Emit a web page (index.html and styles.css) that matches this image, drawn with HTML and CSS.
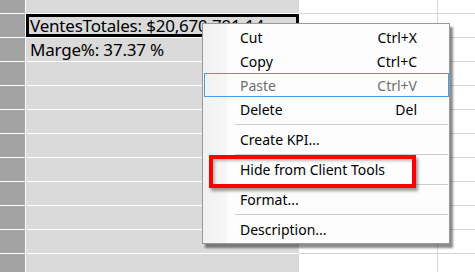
FILE: index.html
```html
<!DOCTYPE html>
<html lang="en">
<head>
    <meta charset="UTF-8">
    <title>Measures grid - context menu</title>
    <link rel="stylesheet" href="styles.css">
</head>
<body>
    <div class="sheet">
        <div class="row first">
            <div class="hdr"></div><div class="cell"></div><div class="blank"></div><div class="blank rest"></div>
        </div>
        <div class="row">
            <div class="hdr"></div><div class="cell selected">VentesTotales: $20,670,791.14</div><div class="blank"></div><div class="blank rest"></div>
        </div>
        <div class="row">
            <div class="hdr"></div><div class="cell">Marge%: 37.37 %</div><div class="blank"></div><div class="blank rest"></div>
        </div>
        <div class="row"><div class="hdr"></div><div class="cell"></div><div class="blank"></div><div class="blank rest"></div></div>
        <div class="row"><div class="hdr"></div><div class="cell"></div><div class="blank"></div><div class="blank rest"></div></div>
        <div class="row"><div class="hdr"></div><div class="cell"></div><div class="blank"></div><div class="blank rest"></div></div>
        <div class="row"><div class="hdr"></div><div class="cell"></div><div class="blank"></div><div class="blank rest"></div></div>
        <div class="row"><div class="hdr"></div><div class="cell"></div><div class="blank"></div><div class="blank rest"></div></div>
        <div class="row"><div class="hdr"></div><div class="cell"></div><div class="blank"></div><div class="blank rest"></div></div>
        <div class="row"><div class="hdr"></div><div class="cell"></div><div class="blank"></div><div class="blank rest"></div></div>
        <div class="row"><div class="hdr"></div><div class="cell"></div><div class="blank"></div><div class="blank rest"></div></div>
        <div class="row"><div class="hdr"></div><div class="cell"></div><div class="blank"></div><div class="blank rest"></div></div>
    </div>

    <!-- right-click menu over the grid -->
    <div class="context-menu">
        <div class="menu-item"><span>Cut</span><span>Ctrl+X</span></div>
        <div class="menu-item"><span>Copy</span><span>Ctrl+C</span></div>
        <div class="menu-item disabled hover"><span>Paste</span><span>Ctrl+V</span></div>
        <div class="menu-item"><span>Delete</span><span>Del</span></div>
        <div class="separator"></div>
        <div class="menu-item"><span>Create KPI...</span></div>
        <div class="separator"></div>
        <div class="menu-item"><span>Hide from Client Tools</span></div>
        <div class="separator"></div>
        <div class="menu-item"><span>Format...</span></div>
        <div class="separator"></div>
        <div class="menu-item"><span>Description...</span></div>
    </div>

    <div class="highlight"></div>
</body>
</html>
```

FILE: styles.css
```css
/* Basic Reset */
* {
    margin: 0;
    padding: 0;
    box-sizing: border-box;
}

body {
    font-family: "Noto Sans", "Open Sans", sans-serif;
    background-color: #fff;
    overflow: hidden;
    height: 272px;
}

/* Grid */
.sheet {
    display: flex;
    flex-direction: column;
}

.row {
    display: flex;
    height: 24px;
    flex-shrink: 0;
}

.row.first {
    height: 14px;
}

.hdr {
    width: 26px;
    background: #a3a3a3;
    border-right: 1px solid #fff;
    border-bottom: 1px solid #fff;
}

.cell {
    width: 273px;
    background: #dadada;
    border-bottom: 1px solid #fff;
    padding-left: 4px;
    font-size: 17px;
    letter-spacing: -0.2px;
    line-height: 24px;
    color: #000;
    white-space: nowrap;
    overflow: hidden;
}

.cell.selected {
    box-shadow: inset 0 0 0 3px #000;
}

.blank {
    width: 139px;
    border-right: 1px solid #d6d6d6;
    border-bottom: 1px solid #d6d6d6;
}

.blank.rest {
    flex: 1;
    border-right: none;
}

/* Context menu */
.context-menu {
    position: absolute;
    left: 202px;
    top: 23px;
    width: 248px;
    height: 221px;
    border: 1px solid #999;
    padding: 1px 0 1px 1px;
    background: linear-gradient(to right, #f1f1f1 0, #f6f6f6 24px, #fdfdfd 24px);
    box-shadow: 3px 4px 2px rgba(0, 0, 0, 0.45);
    font-size: 14px;
    color: #000;
}

.menu-item {
    display: flex;
    justify-content: space-between;
    align-items: center;
    height: 24px;
    padding: 0 31px 0 35px;
    border: 1px solid transparent;
}

.menu-item.hover {
    border-color: #4a9be8;
}

.menu-item.disabled {
    color: #6d6d6d;
}

.separator {
    height: 6px;
    margin-left: 31px;
    margin-right: 1px;
    border-top: 3px solid transparent;
    border-bottom: 2px solid transparent;
    background: #cdcdcd;
    background-clip: padding-box;
}

/* Red annotation box */
.highlight {
    position: absolute;
    left: 209px;
    top: 155px;
    width: 207px;
    height: 33px;
    border: 4px solid #f00;
    box-shadow: 2px 3px 3px rgba(0, 0, 0, 0.4), inset 2px 2px 3px rgba(0, 0, 0, 0.25);
}
```
